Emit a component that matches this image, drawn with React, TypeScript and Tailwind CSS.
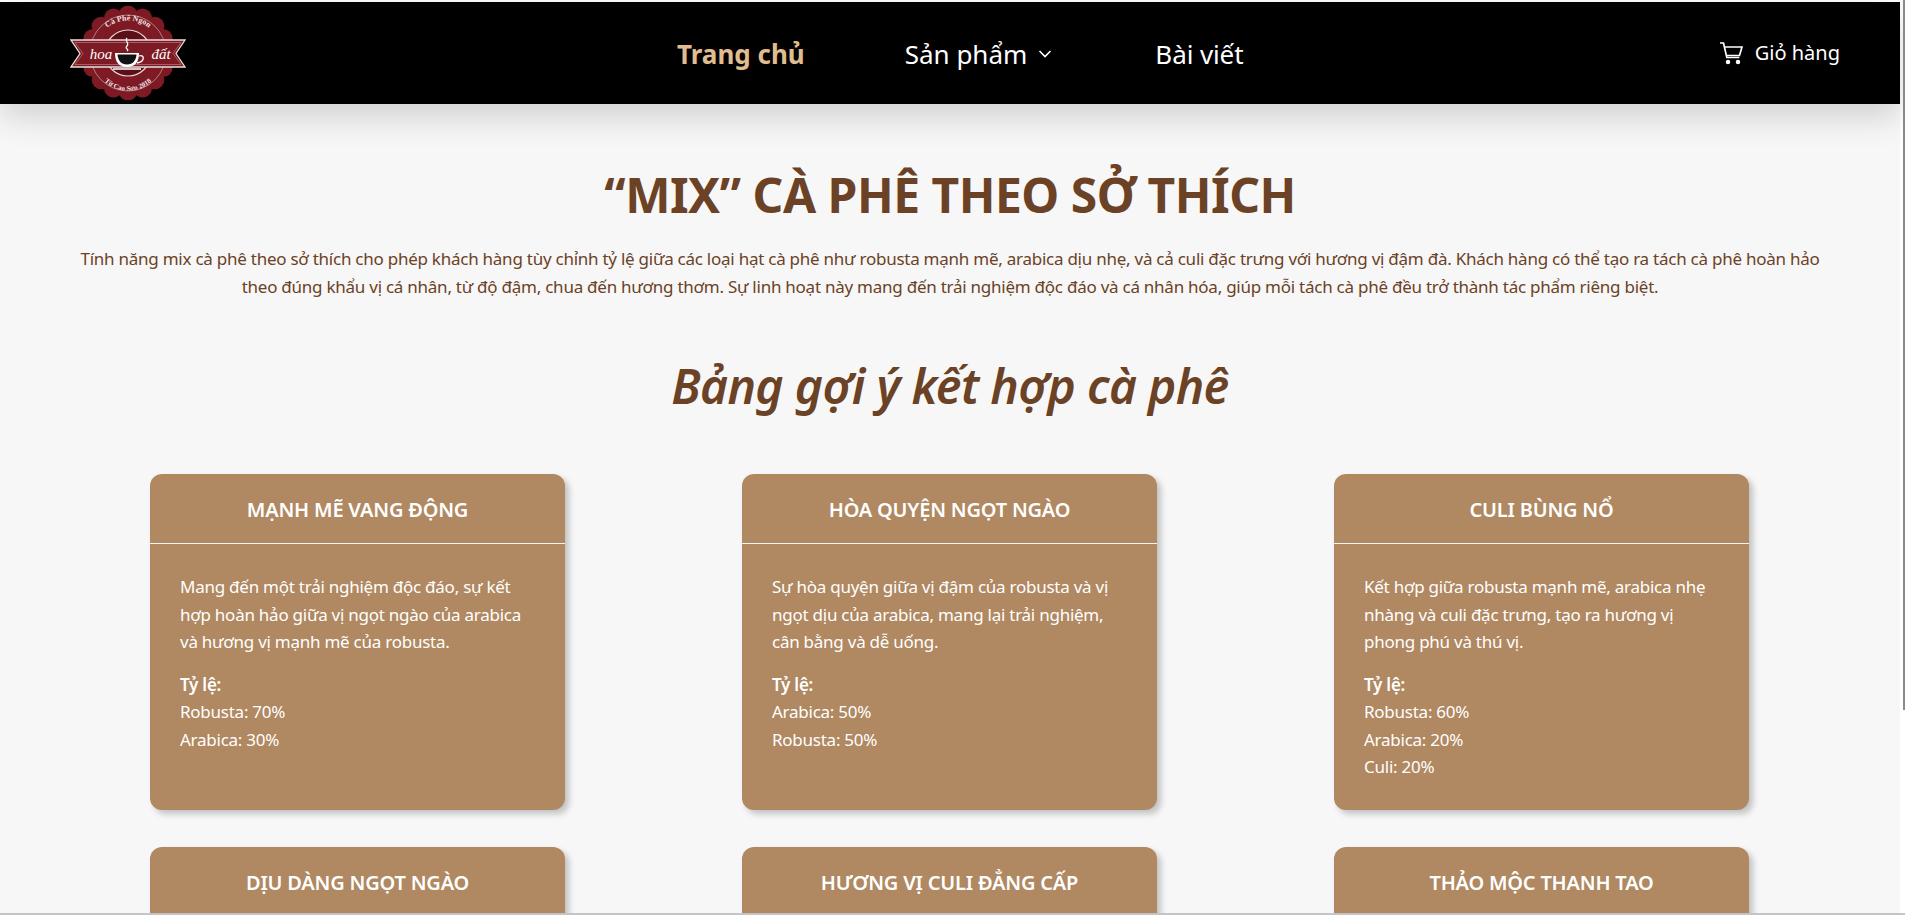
const cards = [
  {
    title: "MẠNH MẼ VANG ĐỘNG",
    desc: "Mang đến một trải nghiệm độc đáo, sự kết hợp hoàn hảo giữa vị ngọt ngào của arabica và hương vị mạnh mẽ của robusta.",
    ratios: ["Robusta: 70%", "Arabica: 30%"],
  },
  {
    title: "HÒA QUYỆN NGỌT NGÀO",
    desc: "Sự hòa quyện giữa vị đậm của robusta và vị ngọt dịu của arabica, mang lại trải nghiệm, cân bằng và dễ uống.",
    ratios: ["Arabica: 50%", "Robusta: 50%"],
  },
  {
    title: "CULI BÙNG NỔ",
    desc: "Kết hợp giữa robusta mạnh mẽ, arabica nhẹ nhàng và culi đặc trưng, tạo ra hương vị phong phú và thú vị.",
    ratios: ["Robusta: 60%", "Arabica: 20%", "Culi: 20%"],
  },
  {
    title: "DỊU DÀNG NGỌT NGÀO",
    desc: "Vị ngọt ngào của arabica hòa cùng chút đậm đà từ robusta, nhẹ nhàng và dễ thưởng thức.",
    ratios: ["Arabica: 70%", "Robusta: 30%"],
  },
  {
    title: "HƯƠNG VỊ CULI ĐẲNG CẤP",
    desc: "Culi đậm đà kết hợp cùng arabica thanh nhẹ, tạo nên hương vị đẳng cấp riêng.",
    ratios: ["Culi: 60%", "Arabica: 40%"],
  },
  {
    title: "THẢO MỘC THANH TAO",
    desc: "Hương thảo mộc thanh tao hòa quyện cùng cà phê, mang lại cảm giác thư thái.",
    ratios: ["Arabica: 80%", "Culi: 20%"],
  },
];

function Logo() {
  const scallops = [];
  for (let i = 0; i < 16; i++) {
    const a = (i / 16) * Math.PI * 2;
    scallops.push(<circle key={i} cx={58 + 38 * Math.cos(a)} cy={47 + 38 * Math.sin(a)} r="9.5" fill="#7d1a24" />);
  }
  return (
    <svg width="118" height="94" viewBox="0 0 118 94">
      {scallops}
      <circle cx="58" cy="47" r="40" fill="#7d1a24" />
      <circle cx="58" cy="47" r="38" fill="none" stroke="#c9a6a6" strokeWidth="0.7" />
      <circle cx="58" cy="47" r="23" fill="#5c0f18" stroke="#e8d8d8" strokeWidth="1.200" />
      <path d="M1 34H115L106 47.500L115 61H1L10 47.500Z" fill="#7d1a24" stroke="#eadede" strokeWidth="1.300" />
      <path d="M5 36.500H111L103 47.500L111 58.500H5L13 47.500Z" fill="none" stroke="#c9a6a6" strokeWidth="0.5" />
      <path d="M45 47h24c0 9-4 14-12 14S45 56 45 47Z" fill="#fff" />
      <path d="M47.500 48.500h19c-.5 6-3.500 10-9.500 10S48 54.500 47.500 48.500Z" fill="#111" />
      <path d="M69 50c6-2 6 6-2 7" fill="none" stroke="#fff" strokeWidth="1.300" />
      <path d="M43 63h28" stroke="#fff" strokeWidth="1.500" />
      <path d="M57 32c-3 3 3 5 0 8s3 3 0 5" fill="none" stroke="#fff" strokeWidth="1.200" />
      <text x="31" y="53" fontSize="15" fontFamily="'Liberation Serif', serif" fontStyle="italic" fill="#fff" textAnchor="middle">hoa</text>
      <text x="91" y="53" fontSize="15" fontFamily="'Liberation Serif', serif" fontStyle="italic" fill="#fff" textAnchor="middle">đất</text>
      <path id="logoTop" d="M30 30A33 33 0 0 1 86 30" fill="none" />
      <text fontSize="8" fontWeight="700" fill="#f1e4e4" fontFamily="'Liberation Serif', serif">
        <textPath href="#logoTop" startOffset="50%" textAnchor="middle">Cà Phê Ngon</textPath>
      </text>
      <path id="logoBottom" d="M27 66A35 35 0 0 0 89 66" fill="none" />
      <text fontSize="7" fontWeight="700" fill="#f1e4e4" fontFamily="'Liberation Serif', serif">
        <textPath href="#logoBottom" startOffset="50%" textAnchor="middle">Từ Cao Sơn 2018</textPath>
      </text>
    </svg>
  );
}

function Card({ card }: { card: (typeof cards)[number] }) {
  return (
    <div className="h-[336px] rounded-xl bg-[#b08861] text-white shadow-[4px_4px_6px_rgba(0,0,0,0.22)]">
      <h3 className="flex h-[70px] items-center justify-center border-b border-white/90 pt-[2px] text-[20px] font-semibold tracking-[-0.2px]">
        {card.title}
      </h3>
      <div className="px-[30px] pt-[29px] text-[17px] leading-[27.5px] tracking-[-0.25px]">
        <p className="mb-[15px]">{card.desc}</p>
        <p className="font-semibold">Tỷ lệ:</p>
        {card.ratios.map((r) => (
          <p key={r}>{r}</p>
        ))}
      </div>
    </div>
  );
}

export default function App() {
  return (
    <div className="relative h-[915px] overflow-hidden bg-white pt-[2px] font-['Noto_Sans',sans-serif]">
      <div className="h-[913px] w-[1900px] bg-[#f7f7f7]">
        <header className="relative flex h-[102px] items-center justify-between bg-black pr-[60px] pl-[70px] shadow-[0_12px_32px_rgba(0,0,0,0.16)]">
          <Logo />
          <nav className="absolute left-[677px] flex items-center pt-[2px] text-[26px] text-white">
            <a className="font-bold text-[#e0bd8f]">Trang chủ</a>
            <a className="ml-[100px] flex items-center">
              Sản phẩm
              <svg className="ml-[10px]" width="16" height="16" viewBox="0 0 16 16" fill="none" stroke="currentColor" strokeWidth="1.600">
                <path d="M2.500 5 8 10.500 13.500 5" />
              </svg>
            </a>
            <a className="ml-[102px] tracking-[-0.1px]">Bài viết</a>
          </nav>
          <a className="flex items-center gap-3 text-[20px] text-white">
            <svg width="24" height="24" viewBox="0 0 24 24" fill="none" stroke="currentColor" strokeWidth="1.700">
              <path d="M1 2h3.500l3.300 14.500h12.500" />
              <path d="M5.500 6H23l-2.500 8.500H7.300" />
              <circle cx="9" cy="21" r="1.400" fill="currentColor" />
              <circle cx="19" cy="21" r="1.400" fill="currentColor" />
            </svg>
            Giỏ hàng
          </a>
        </header>
        <main className="text-center text-[#6b4226]">
          <h1 className="mt-[55px] text-[48px] leading-[72px] font-bold tracking-[-0.5px]">“MIX” CÀ PHÊ THEO SỞ THÍCH</h1>
          <p className="mx-auto mt-[14px] w-[1760px] text-[17px] leading-[28px] tracking-[-0.25px]">
            Tính năng mix cà phê theo sở thích cho phép khách hàng tùy chỉnh tỷ lệ giữa các loại hạt cà phê như robusta mạnh mẽ, arabica dịu nhẹ, và cả culi đặc trưng với hương vị đậm đà. Khách hàng có thể tạo ra tách cà phê hoàn hảo theo đúng khẩu vị cá nhân, từ độ đậm, chua đến hương thơm. Sự linh hoạt này mang đến trải nghiệm độc đáo và cá nhân hóa, giúp mỗi tách cà phê đều trở thành tác phẩm riêng biệt.
          </p>
          <h2 className="mt-[49px] text-[48px] leading-[72px] font-semibold tracking-[-0.65px] italic">Bảng gợi ý kết hợp cà phê</h2>
          <div className="mt-[52px] ml-[150px] grid w-[1599px] grid-cols-3 gap-x-[177px] gap-y-[37px] text-left">
            {cards.map((c) => (
              <Card key={c.title} card={c} />
            ))}
          </div>
        </main>
      </div>
      <div className="absolute top-0 right-0 h-[710px] w-[2px] bg-[#8a8a8a]" />
      <div className="absolute right-0 bottom-0 left-0 h-[2px] bg-[#c4c4c4]" />
    </div>
  );
}
